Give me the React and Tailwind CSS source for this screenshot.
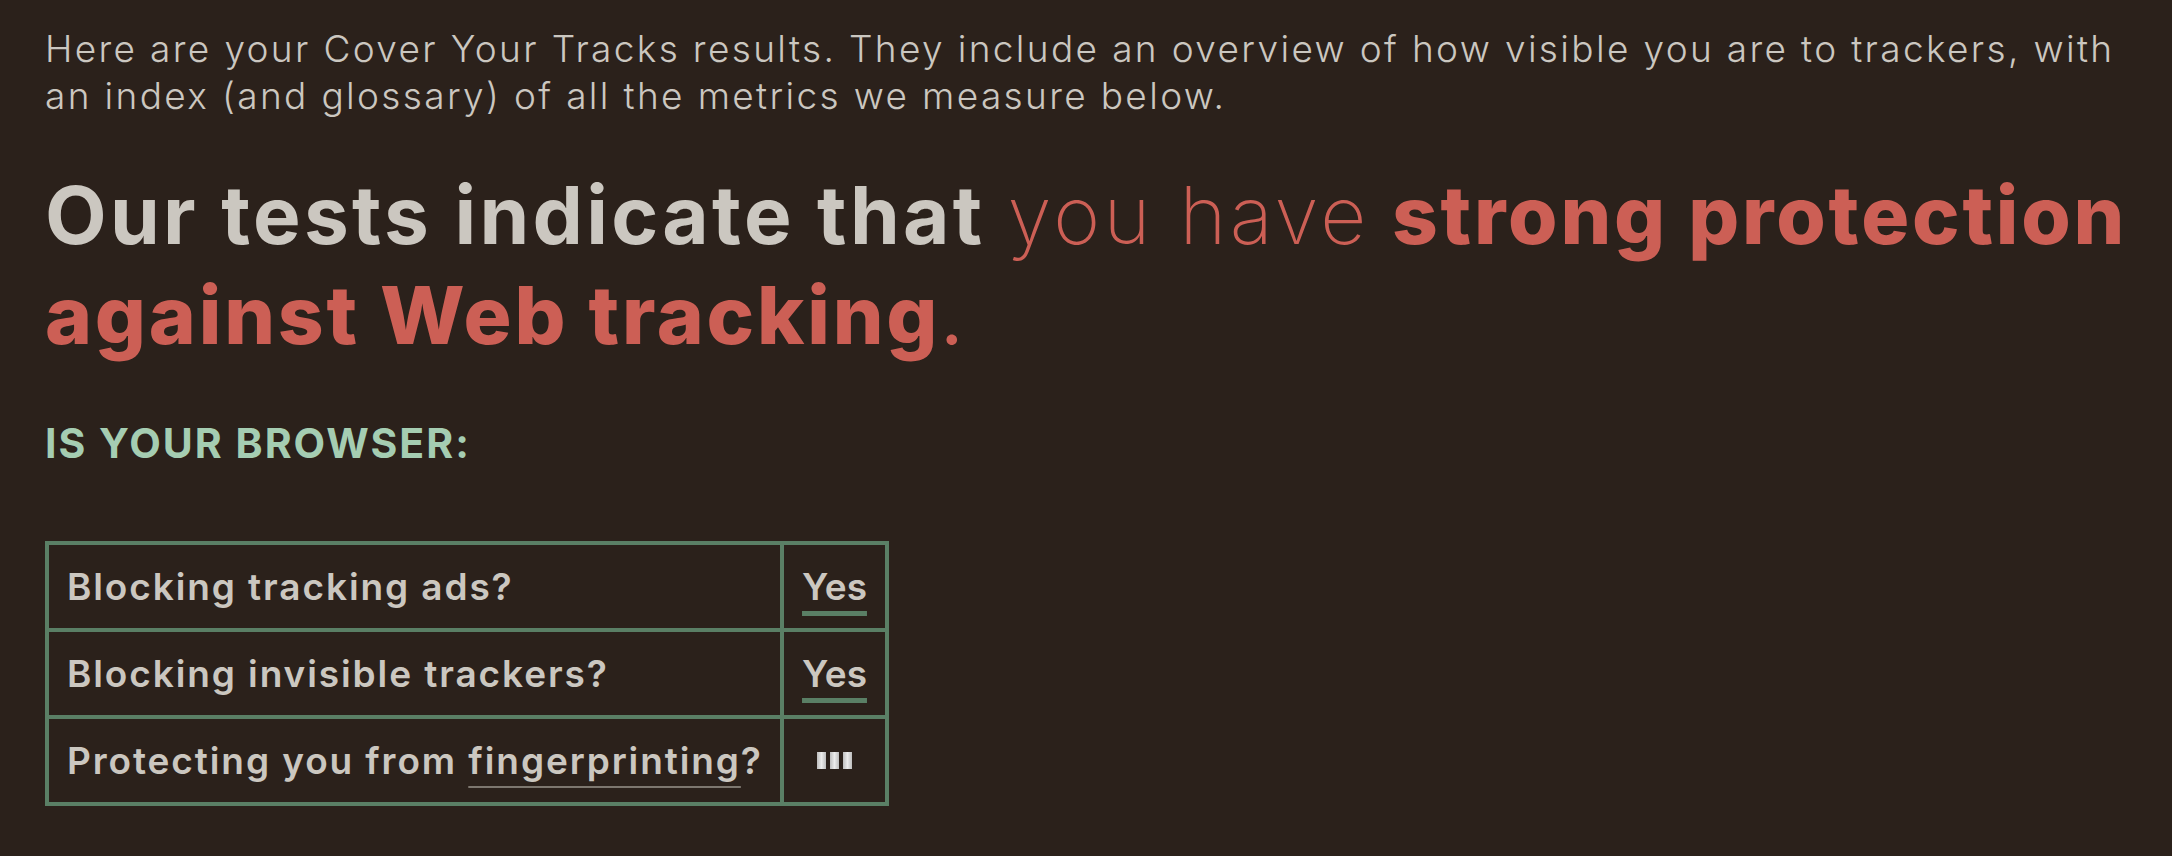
import React from 'react';

const rows = [
  { q: 'Blocking tracking ads?', a: 'yes' },
  { q: 'Blocking invisible trackers?', a: 'yes' },
  { q: 'fp', a: 'loading' },
];

function Answer({ kind }) {
  if (kind === 'yes') {
    return (
      <span className="underline decoration-[5px] decoration-[#5a7f65] underline-offset-[11px]">Yes</span>
    );
  }
  // three little bars, still loading
  return (
    <span className="flex gap-[4px] items-center justify-center">
      <span className="w-[9px] h-[17px] bg-gradient-to-r from-[#bdbdbd] via-[#ececec] to-[#bdbdbd]"></span>
      <span className="w-[9px] h-[17px] bg-gradient-to-r from-[#bdbdbd] via-[#ececec] to-[#bdbdbd]"></span>
      <span className="w-[9px] h-[17px] bg-gradient-to-r from-[#bdbdbd] via-[#ececec] to-[#bdbdbd]"></span>
    </span>
  );
}

export default function App() {
  return (
    <div className="min-h-screen w-full bg-[#2b211b] text-[#cbc7c0] font-['Inter',sans-serif] pl-[45px] pr-[30px] pt-[25px]">
      <p className="text-[37px] leading-[47px] font-light tracking-[2.35px]">
        Here are your Cover Your Tracks results. They include an overview of how visible you are to trackers, with an index (and glossary) of all the metrics we measure below.
      </p>

      <h1 className="mt-[46px] text-[80px] leading-[100px] font-bold tracking-[3.3px]">
        Our tests indicate that{' '}
        <span className="text-[#cc5f55] font-extralight">you have</span>{' '}
        <span className="text-[#cc5f55] font-extrabold tracking-[2.8px]">strong protection against Web tracking</span>
        <span className="text-[#cc5f55] font-normal">.</span>
      </h1>

      <h2 className="mt-[53px] text-[41px] leading-[50px] font-bold uppercase tracking-[2px] text-[#a5cdb2]">
        Is your browser:
      </h2>

      <div className="mt-[73px] w-[844px] grid grid-cols-[731px_101px] gap-[4px] p-[4px] bg-[#5a7f65] text-[37px] font-semibold tracking-[1.9px]">
        {rows.map((r, i) => (
          <React.Fragment key={i}>
            <div className="bg-[#2b211b] h-[83px] pl-[18px] flex items-center whitespace-nowrap">
              {r.q === 'fp' ? (
                <span>
                  Protecting you from{' '}
                  <span className="underline decoration-[2px] decoration-[#7d776f] underline-offset-[12px]">fingerprinting</span>?
                </span>
              ) : (
                r.q
              )}
            </div>
            <div className="bg-[#2b211b] h-[83px] flex items-center justify-center tracking-normal">
              <Answer kind={r.a} />
            </div>
          </React.Fragment>
        ))}
      </div>
    </div>
  );
}
